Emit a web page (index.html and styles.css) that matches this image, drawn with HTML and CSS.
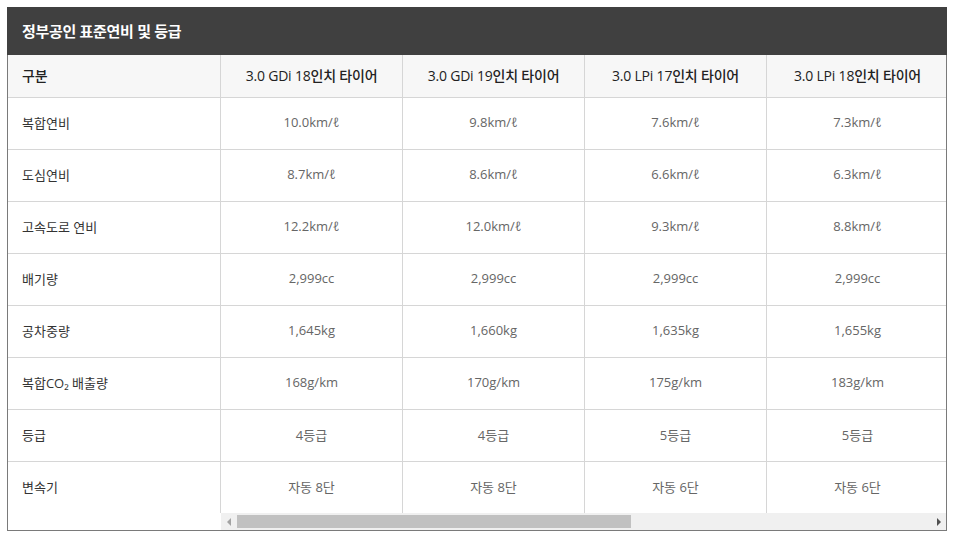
FILE: index.html
```html
<!DOCTYPE html>
<html lang="ko">
<head>
<meta charset="utf-8">
<title>정부공인 표준연비 및 등급</title>
<link rel="stylesheet" href="styles.css">
</head>
<body>
<section class="spec">
  <h2 class="spec-title">정부공인 표준연비 및 등급</h2>
  <div class="spec-body">
    <div class="fixed-col">
      <div class="cell head">구분</div>
      <div class="cell label">복합연비</div>
      <div class="cell label">도심연비</div>
      <div class="cell label">고속도로 연비</div>
      <div class="cell label">배기량</div>
      <div class="cell label">공차중량</div>
      <div class="cell label">복합CO₂ 배출량</div>
      <div class="cell label">등급</div>
      <div class="cell label last">변속기</div>
      <div class="filler"></div>
    </div>
    <div class="scroll-area">
      <div class="viewport">
        <div class="grid">
          <div class="row headrow">
            <div class="cell head c">3.0 GDi 18인치 타이어</div>
            <div class="cell head c">3.0 GDi 19인치 타이어</div>
            <div class="cell head c">3.0 LPi 17인치 타이어</div>
            <div class="cell head c">3.0 LPi 18인치 타이어</div>
          </div>
          <div class="row">
            <div class="cell v">10.0km/ℓ</div><div class="cell v">9.8km/ℓ</div><div class="cell v">7.6km/ℓ</div><div class="cell v">7.3km/ℓ</div>
          </div>
          <div class="row">
            <div class="cell v">8.7km/ℓ</div><div class="cell v">8.6km/ℓ</div><div class="cell v">6.6km/ℓ</div><div class="cell v">6.3km/ℓ</div>
          </div>
          <div class="row">
            <div class="cell v">12.2km/ℓ</div><div class="cell v">12.0km/ℓ</div><div class="cell v">9.3km/ℓ</div><div class="cell v">8.8km/ℓ</div>
          </div>
          <div class="row">
            <div class="cell v">2,999cc</div><div class="cell v">2,999cc</div><div class="cell v">2,999cc</div><div class="cell v">2,999cc</div>
          </div>
          <div class="row">
            <div class="cell v">1,645kg</div><div class="cell v">1,660kg</div><div class="cell v">1,635kg</div><div class="cell v">1,655kg</div>
          </div>
          <div class="row">
            <div class="cell v">168g/km</div><div class="cell v">170g/km</div><div class="cell v">175g/km</div><div class="cell v">183g/km</div>
          </div>
          <div class="row">
            <div class="cell v">4등급</div><div class="cell v">4등급</div><div class="cell v">5등급</div><div class="cell v">5등급</div>
          </div>
          <div class="row">
            <div class="cell v last">자동 8단</div><div class="cell v last">자동 8단</div><div class="cell v last">자동 6단</div><div class="cell v last">자동 6단</div>
          </div>
        </div>
      </div>
      <div class="scrollbar">
        <div class="sb-btn sb-left"><svg width="5" height="8" viewBox="0 0 5 8"><path d="M4 0 L0 4 L4 8 Z" fill="#a3a3a3"/></svg></div>
        <div class="sb-track"><div class="sb-thumb"></div></div>
        <div class="sb-btn sb-right"><svg width="5" height="8" viewBox="0 0 5 8"><path d="M1 0 L5 4 L1 8 Z" fill="#505050"/></svg></div>
      </div>
    </div>
  </div>
</section>
</body>
</html>
```

FILE: styles.css
```css
* { box-sizing: border-box; }
body {
  margin: 7px;
  background: #fff;
  font-family: "Open Sans", "Noto Sans CJK KR", sans-serif;
}
.spec {
  width: 940px;
  border: 1px solid #7a7a7a;
  border-top: none;
}
.spec-title {
  margin: 0 -1px;
  height: 48px;
  background: #404040;
  color: #fff;
  font-size: 15px;
  font-weight: 700;
  line-height: 48px;
  padding-left: 15px;
  letter-spacing: -0.3px;
}
.spec-body {
  display: flex;
}
.fixed-col {
  width: 213px;
  flex: none;
  display: flex;
  flex-direction: column;
}
.fixed-col .cell {
  border-right: 1px solid #d6d6d6;
}
.cell {
  height: 52px;
  border-bottom: 1px solid #d6d6d6;
  display: flex;
  align-items: center;
  font-size: 13px;
  color: #555;
  white-space: nowrap;
  padding-bottom: 3px;
}
.cell.head {
  height: 43px;
  background: #f7f7f7;
  color: #222;
  font-size: 14px;
  font-weight: 500;
  letter-spacing: -0.2px;
  padding-bottom: 2px;
}
.fixed-col .cell.head, .fixed-col .cell.label { padding-left: 14px; }
.cell.label { color: #333; }
.cell.last { height: 51px; border-bottom: none; }
.filler { height: 17px; }
.scroll-area {
  width: 725px;
  flex: none;
}
.viewport {
  overflow: hidden;
}
.grid {
  width: 728px;
  display: flex;
  flex-direction: column;
}
.row {
  display: flex;
}
.row .cell {
  width: 182px;
  flex: none;
  border-right: 1px solid #d6d6d6;
  justify-content: center;
}
.cell.v { color: #666; }
.scrollbar {
  height: 17px;
  display: flex;
  background: #f0f0f0;
}
.sb-btn {
  width: 16px;
  flex: none;
  display: flex;
  align-items: center;
  justify-content: center;
}
.sb-track {
  flex: 1;
  padding: 2px 0;
}
.sb-thumb {
  width: 394px;
  height: 13px;
  background: #c1c1c1;
}
```
